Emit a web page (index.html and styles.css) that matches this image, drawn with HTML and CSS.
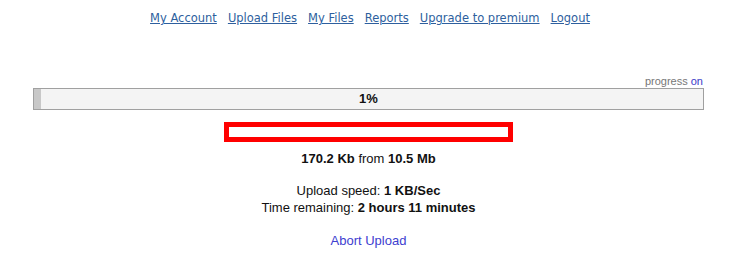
FILE: index.html
```html
<!DOCTYPE html>
<html>
<head>
<meta charset="utf-8">
<link rel="stylesheet" href="styles.css">
</head>
<body>
<nav class="nav">
  <a href="#">My Account</a>
  <a href="#">Upload Files</a>
  <a href="#">My Files</a>
  <a href="#">Reports</a>
  <a href="#">Upgrade to premium</a>
  <a href="#">Logout</a>
</nav>
<div class="wrap">
  <div class="toggle">progress <a href="#">on</a></div>
  <div class="bar">
    <div class="fill" style="width:7px"></div>
    <div class="pct">1%</div>
  </div>
  <div class="redbox"></div>
  <div class="info">
    <p class="size"><b>170.2 Kb</b> from <b>10.5 Mb</b></p>
    <p class="stats">Upload speed: <b>1 KB/Sec</b><br>Time remaining: <b>2 hours 11 minutes</b></p>
    <p class="abort"><a href="#">Abort Upload</a></p>
  </div>
</div>
</body>
</html>
```
FILE: styles.css
```css
html, body { margin: 0; padding: 0; background: #fff; }
body { font-family: "Liberation Sans", Arial, sans-serif; font-size: 13px; color: #111; }
.nav {
  display: flex;
  justify-content: center;
  gap: 11px;
  padding-top: 11px;
  height: 20px;
  font-family: "DejaVu Sans", Verdana, sans-serif;
  font-size: 11.5px;
  padding-right: 14px;
}
.nav a { color: #2e5f9e; text-decoration: underline; }
.wrap { margin: 43px 50px 0 33px; }
.toggle { text-align: right; font-size: 11px; color: #777; line-height: 14px; margin-right: 1px; }
.toggle a { color: #3a3ac8; text-decoration: none; }
.bar {
  position: relative;
  height: 20px;
  border: 1px solid #a0a0a0;
  background: #f4f4f4;
  display: flex;
}
.fill { background: #c8c8c8; height: 100%; }
.pct {
  position: absolute; left: 0; right: 0; top: 0;
  text-align: center; font-weight: bold; font-size: 13px; line-height: 20px;
}
.redbox {
  width: 279px; height: 10px;
  border: 5px solid #ff0000;
  margin: 12px auto 0;
}
.info { text-align: center; }
.info p { margin: 0; }
.size { margin-top: 9px !important; line-height: 16px; }
.stats { margin-top: 15px !important; line-height: 17px; }
.abort { margin-top: 17px !important; }
.abort a { color: #4040d0; text-decoration: none; }
```
